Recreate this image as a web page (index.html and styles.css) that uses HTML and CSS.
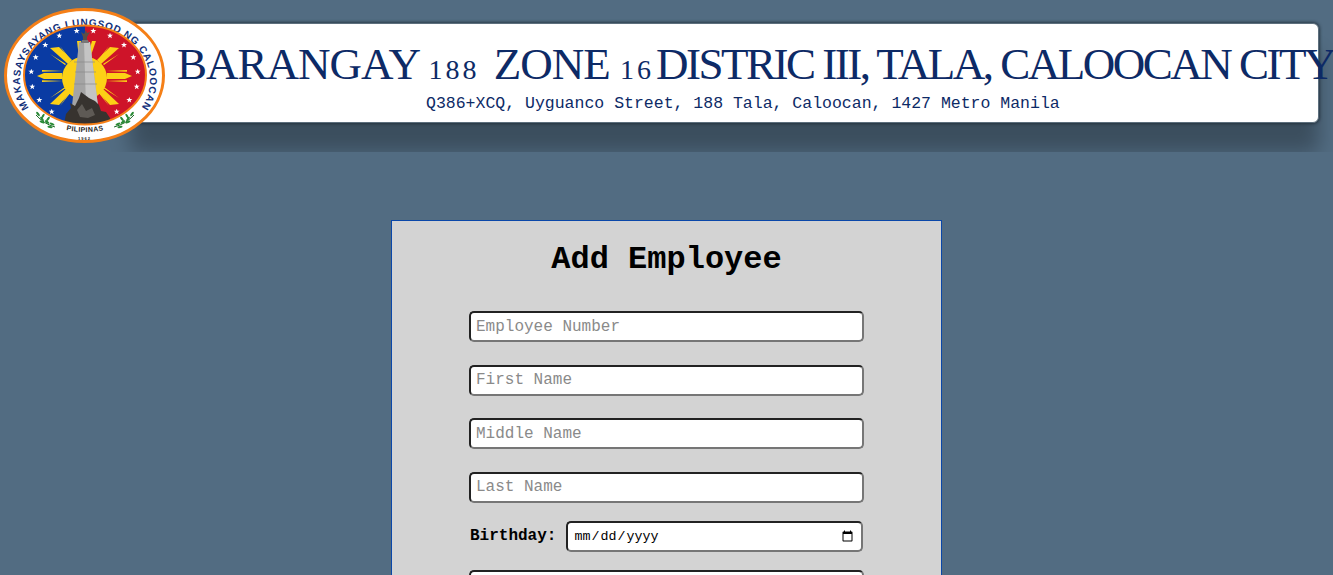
FILE: index.html
```html
<!DOCTYPE html>
<html lang="en">
<head>
<meta charset="utf-8">
<title>Add Employee</title>
<link rel="stylesheet" href="styles.css">
</head>
<body>
<header class="site-header">
  <svg class="seal" viewBox="0 0 170 146" width="170" height="146" role="img" aria-label="Caloocan seal">
    <defs>
      <path id="arcTop" d="M29 108 A65 54.500 0 1 1 141 108"/>
      <path id="arcBottom" d="M55 127 Q85 137 115 127"/>
      <clipPath id="innerClip"><ellipse cx="85" cy="75" rx="61" ry="49.500"/></clipPath>
      <polygon id="star" points="0,-3 .8,-1 3,-1 1.200,.4 1.900,2.600 0,1.300 -1.900,2.600 -1.200,.4 -3,-1 -.8,-1"/>
      <g id="leaf"><ellipse cx="0" cy="0" rx="2.600" ry="1.100"/></g>
    </defs>
    <ellipse cx="84.500" cy="75.500" rx="79" ry="66" class="seal-rim"/>
    <text class="seal-text"><textPath href="#arcTop" startOffset="50%" text-anchor="middle">MAKASAYSAYANG LUNGSOD NG CALOOCAN</textPath></text>
    <text class="seal-pil"><textPath href="#arcBottom" startOffset="50%" text-anchor="middle">PILIPINAS</textPath></text>
    <text x="84.500" y="139.500" class="seal-year">1962</text>
    <g clip-path="url(#innerClip)">
      <rect x="20" y="20" width="65" height="110" fill="#0a3ba3"/>
      <rect x="85" y="20" width="65" height="110" fill="#ce1429"/>
      <g fill="#fcd116">
        <ellipse cx="84.500" cy="78" rx="22.500" ry="21.500"/>
        <path d="M37 76 L44 73 L62 73 L62 79 L44 79Z"/>
        <path d="M132 76 L125 73 L107 73 L107 79 L125 79Z"/>
        <path d="M42 70 L63 71 L42 71.800Z M42 82 L63 81 L42 80.200Z"/>
        <path d="M127 70 L106 71 L127 71.800Z M127 82 L106 81 L127 80.200Z"/>
        <path d="M50 48 L59 47 L72 60 L68 64Z"/>
        <path d="M119 48 L110 47 L97 60 L101 64Z"/>
        <path d="M50 54 L66 64 L65 65Z M60 46 L71 60 L70 61Z"/>
        <path d="M119 54 L103 64 L104 65Z M109 46 L98 60 L99 61Z"/>
        <path d="M50 104 L59 105 L72 91 L68 87Z"/>
        <path d="M119 104 L110 105 L97 91 L101 87Z"/>
        <path d="M50 98 L66 88 L65 87Z M60 106 L71 92 L70 91Z"/>
        <path d="M119 98 L103 88 L104 87Z M109 106 L98 92 L99 91Z"/>
        <path d="M77 41 L81 41 L82 58 L79 58Z"/>
        <path d="M92 41 L96 41 L90 58 L87 58Z"/>
      </g>
      <g fill="#fff">
        <use href="#star" x="76.700" y="31"/><use href="#star" x="59.300" y="35.700"/><use href="#star" x="45.300" y="45"/><use href="#star" x="35.700" y="57.300"/>
        <use href="#star" x="31.300" y="71.700"/><use href="#star" x="32.300" y="86.700"/><use href="#star" x="39.300" y="100"/><use href="#star" x="51.700" y="111.700"/>
        <use href="#star" x="93.300" y="31"/><use href="#star" x="110" y="35.700"/><use href="#star" x="124" y="45"/><use href="#star" x="133.300" y="57.300"/>
        <use href="#star" x="137.700" y="71.700"/><use href="#star" x="136.700" y="86.700"/><use href="#star" x="129.300" y="100"/><use href="#star" x="116.700" y="111.700"/>
      </g>
      <path d="M79 42 L90 42 L98 106 L72 106Z" fill="#a4a4a4"/>
      <path d="M84 42 L90 42 L98 106 L86 106Z" fill="#c4c4c4"/>
      <path d="M74 62 L95 62 M75 72 L96 72 M74 84 L97 84" stroke="#8a8a8a" stroke-width=".7"/>
      <path d="M82 40 L88 40 L89 43 L81 43Z" fill="#777"/>
      <path d="M81 32 L84 34 L86 30 L87 33 L90 32 L87 37 L87 40 L83 40 L83 37Z" fill="#5a5048"/>
      <path d="M64 124 L66 114 L71 108 L70 103 L75 106 L79 98 L81 92 L89 98 L95 101 L99 105 L101 111 L106 112 L110 118 L110 124Z" fill="#37332f"/>
      <path d="M77 110 L82 104 L86 111 L92 108 L95 115 L88 118 L80 117Z" fill="#5e5a55"/>
    </g>
    <ellipse cx="85" cy="75" rx="61" ry="49.500" class="seal-inner"/>
    <g class="laurel">
      <path d="M36 115 Q44 124 55 127" />
      <path d="M134 115 Q126 124 114 127" />
    </g>
    <g fill="#2a8a36">
      <use href="#leaf" transform="translate(38 114) rotate(50)"/><use href="#leaf" transform="translate(42 119) rotate(50)"/><use href="#leaf" transform="translate(47 122) rotate(35)"/><use href="#leaf" transform="translate(52 124) rotate(20)"/>
      <use href="#leaf" transform="translate(43 116) rotate(-60)"/><use href="#leaf" transform="translate(48 119) rotate(-50)"/><use href="#leaf" transform="translate(42 122) rotate(20)"/><use href="#leaf" transform="translate(50 127) rotate(10)"/>
      <use href="#leaf" transform="translate(132 114) rotate(-50)"/><use href="#leaf" transform="translate(128 119) rotate(-50)"/><use href="#leaf" transform="translate(123 122) rotate(-35)"/><use href="#leaf" transform="translate(118 124) rotate(-20)"/>
      <use href="#leaf" transform="translate(127 116) rotate(60)"/><use href="#leaf" transform="translate(122 119) rotate(50)"/><use href="#leaf" transform="translate(128 122) rotate(-20)"/><use href="#leaf" transform="translate(120 127) rotate(-10)"/>
    </g>
  </svg>
  <div class="banner">
    <h2 class="banner-title">BARANGAY <span class="num">188</span> ZONE <span class="num">16</span><span class="tight">DISTRIC III, TALA, CALOOCAN CITY</span></h2>
    <p class="banner-addr">Q386+XCQ, Uyguanco Street, 188 Tala, Caloocan, 1427 Metro Manila</p>
  </div>
</header>
<main class="page">
  <form class="card">
    <h1 class="card-title">Add Employee</h1>
    <div class="fields">
      <input class="field" type="text" placeholder="Employee Number">
      <input class="field" type="text" placeholder="First Name">
      <input class="field" type="text" placeholder="Middle Name">
      <input class="field" type="text" placeholder="Last Name">
    </div>
    <div class="bday">
      <label class="bday-label" for="bday">Birthday:</label>
      <input class="field bday-input" id="bday" type="date">
    </div>
    <input class="field" type="text">
  </form>
</main>
</body>
</html>
```
FILE: styles.css
```css
html, body { margin: 0; padding: 0; height: 575px; overflow: hidden; }
body { background: #526c82; font-family: "Liberation Mono", monospace; }
.site-header { position: relative; height: 152px; overflow: hidden; padding: 23px 14px 0 130px; box-sizing: border-box; }
.seal { position: absolute; left: 0; top: 0; z-index: 2; }
.seal-rim { fill: #fff; stroke: #f57f17; stroke-width: 3; }
.seal-inner { fill: none; stroke: #f57f17; stroke-width: 2; }
.seal-text { font: bold 10px "Liberation Sans", sans-serif; fill: #12307a; letter-spacing: .75px; }
.seal-pil { font: bold 7px "Liberation Sans", sans-serif; fill: #222; letter-spacing: .4px; }
.seal-year { font: bold 4px "Liberation Sans", sans-serif; fill: #222; text-anchor: middle; letter-spacing: 1px; }
.laurel { fill: none; stroke: #1f6b2a; stroke-width: 1; }
.banner { height: 100px; box-sizing: border-box; background: #fff; border: 1px solid #5d6f7d; border-radius: 6px; box-shadow: 0 0 3px 1px rgba(30,42,52,.75), 0 30px 20px rgba(0,0,0,.28); padding-left: 46px; display: flex; flex-direction: column; }
.banner-title { margin: 16px 0 0; font: 400 45px/48px "Liberation Serif", serif; color: #0d2a66; white-space: nowrap; letter-spacing: -1px; }
.num { font-size: 28px; letter-spacing: 3px; margin-right: 4px; }
.tight { letter-spacing: -2.500px; margin-left: -2px; }
.banner-addr { margin: 0 0 0 249px; font-size: 16.500px; line-height: 20px; color: #0d2a66; white-space: nowrap; }
.page { display: flex; justify-content: center; padding-top: 68px; }
.card { width: 551px; box-sizing: border-box; background: #d3d3d3; border: 1px solid #0a47a9; border-bottom: 0; padding: 21px 77px 0; display: flex; flex-direction: column; }
.card-title { margin: 0 0 33.400px; font-size: 32px; line-height: 36px; text-align: center; color: #000; }
.fields { display: flex; flex-direction: column; gap: 22.500px; }
.field { width: 395px; height: 31px; box-sizing: border-box; padding: 1px 5px; border: 2px solid; border-color: #222 #767676 #767676 #222; border-radius: 5px; background: #fff; font: 16px "Liberation Mono", monospace; }
.field::placeholder { color: #8a8a8a; }
.bday { display: flex; align-items: center; gap: 10px; margin: 18px 0; }
.bday-label { font-weight: bold; font-size: 16px; margin-left: 1px; }
.bday-input { width: 297px; font-size: 13.333px; }
```
